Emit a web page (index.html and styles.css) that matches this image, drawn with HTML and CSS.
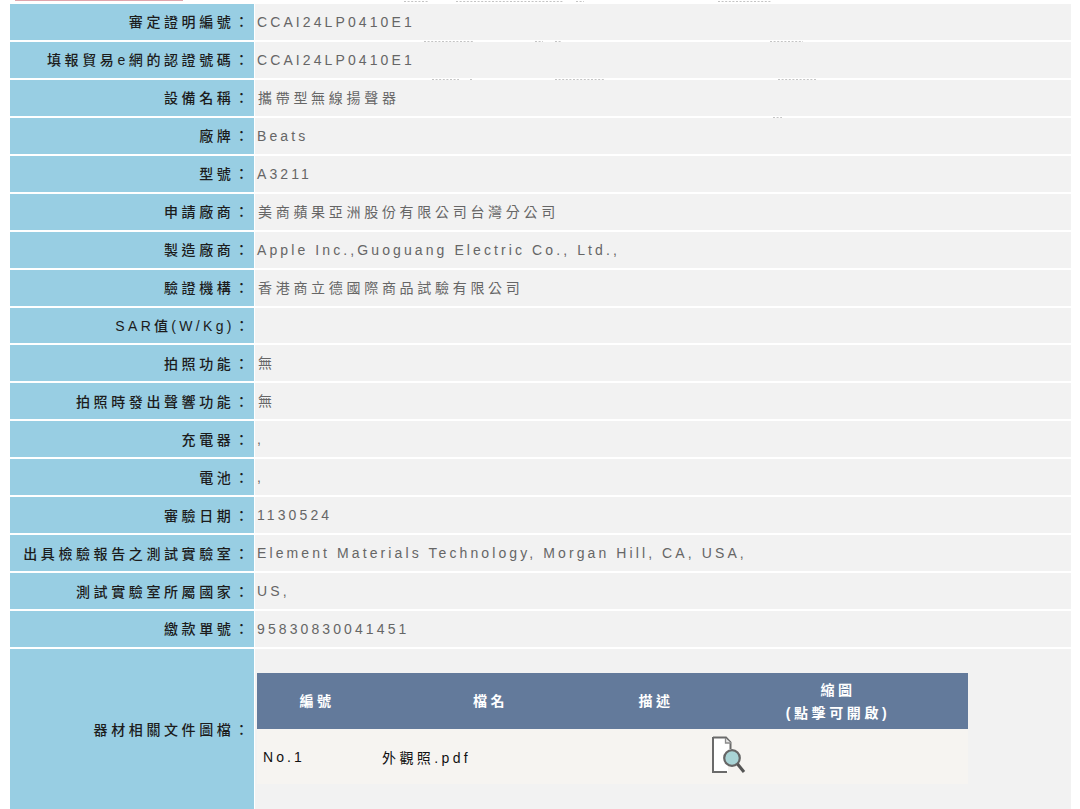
FILE: index.html
```html
<!DOCTYPE html>
<html lang="zh-Hant">
<head>
<meta charset="utf-8">
<title>審定證明</title>
<link rel="stylesheet" href="styles.css">
</head>
<body>
<div class="top-bar"></div>
<svg class="specks" width="1080" height="120" viewBox="0 0 1080 120" aria-hidden="true">
  <path d="M404 1.5H428M456 1.5H564M576 1.5H584M718 1.5H771M424 41.5H473M535 41.5H543M555 41.5H562M770 41.5H803M432 79.5H459M470 79.5H473M555 79.5H605M778 79.5H817M773 117.5H782" fill="none" stroke="#c4c4c4" stroke-width="1" stroke-dasharray="2 1.6"/>
</svg>
<main class="sheet">
  <div class="row"><div class="label">審定證明編號：</div><div class="value">CCAI24LP0410E1</div></div>
  <div class="row"><div class="label">填報貿易e網的認證號碼：</div><div class="value">CCAI24LP0410E1</div></div>
  <div class="row"><div class="label">設備名稱：</div><div class="value value-cjk">攜帶型無線揚聲器</div></div>
  <div class="row"><div class="label">廠牌：</div><div class="value">Beats</div></div>
  <div class="row"><div class="label">型號：</div><div class="value">A3211</div></div>
  <div class="row"><div class="label">申請廠商：</div><div class="value value-cjk">美商蘋果亞洲股份有限公司台灣分公司</div></div>
  <div class="row"><div class="label">製造廠商：</div><div class="value">Apple Inc.,Guoguang Electric Co., Ltd.,</div></div>
  <div class="row"><div class="label">驗證機構：</div><div class="value value-cjk">香港商立德國際商品試驗有限公司</div></div>
  <div class="row"><div class="label label-latin">SAR值(W/Kg)：</div><div class="value"></div></div>
  <div class="row"><div class="label">拍照功能：</div><div class="value value-cjk">無</div></div>
  <div class="row"><div class="label">拍照時發出聲響功能：</div><div class="value value-cjk">無</div></div>
  <div class="row"><div class="label">充電器：</div><div class="value">,</div></div>
  <div class="row"><div class="label">電池：</div><div class="value">,</div></div>
  <div class="row"><div class="label">審驗日期：</div><div class="value">1130524</div></div>
  <div class="row"><div class="label">出具檢驗報告之測試實驗室：</div><div class="value">Element Materials Technology, Morgan Hill, CA, USA,</div></div>
  <div class="row"><div class="label">測試實驗室所屬國家：</div><div class="value">US,</div></div>
  <div class="row"><div class="label">繳款單號：</div><div class="value">95830830041451</div></div>
  <div class="row row-files">
    <div class="label">器材相關文件圖檔：</div>
    <div class="value value-files">
      <div class="files">
        <div class="files-head">
          <div class="col-no">編號</div>
          <div class="col-name">檔名</div>
          <div class="col-desc">描述</div>
          <div class="col-thumb">縮圖<br>(點擊可開啟)</div>
        </div>
        <div class="files-row">
          <div class="col-no">No.1</div>
          <div class="col-name">外觀照.pdf</div>
          <div class="col-desc"></div>
          <div class="col-thumb">
            <svg class="doc-icon" width="36" height="40" viewBox="0 0 36 40" aria-hidden="true">
              <path d="M3 3.5H16L21 9V30H18V38H3Z" fill="#fff"/>
              <path d="M3 3.5H16L20.5 8.5V15M3 3V38H17" fill="none" stroke="#6a6a6a" stroke-width="2"/>
              <path d="M15.5 4V9H21" fill="#e6e6e6" stroke="#8a8a8a" stroke-width="1.3"/>
              <circle cx="22" cy="24" r="7.8" fill="#a9d4d6" stroke="#666" stroke-width="2.2"/>
              <path d="M27.5 30L34 38" stroke="#555" stroke-width="3"/>
            </svg>
          </div>
        </div>
      </div>
    </div>
  </div>
</main>
</body>
</html>
```
FILE: styles.css
```css
* { box-sizing: border-box; }
html, body { margin: 0; padding: 0; background: #fff; }
body {
  position: relative;
  height: 809px;
  overflow: hidden;
  font-family: "Liberation Sans", "Noto Sans CJK TC", sans-serif;
  font-size: 14px;
  letter-spacing: 3.1px;
}
.top-bar {
  width: 168px;
  height: 1px;
  margin-left: 15px;
  background: #e0a5ac;
}
.specks {
  position: absolute;
  top: 0;
  left: 0;
  pointer-events: none;
  z-index: 1;
}
.sheet {
  display: flex;
  flex-direction: column;
  gap: 2px;
  width: 1061px;
  margin: 3px 0 0 10px;
}
.row {
  display: flex;
  gap: 1px;
  height: 35.95px;
}
.label {
  flex: 0 0 244px;
  display: flex;
  align-items: center;
  justify-content: flex-end;
  padding: 0 2px 1px 0;
  background: #98cee3;
  color: #1c1c1c;
  font-weight: 500;
  letter-spacing: 3.6px;
  white-space: nowrap;
}
.label-latin { letter-spacing: 3.3px; }
.value {
  flex: 1;
  display: flex;
  align-items: center;
  padding-left: 2px;
  background: #f2f2f2;
  color: #666;
  white-space: nowrap;
}
.value-cjk {
  padding: 0 0 2px 3px;
  letter-spacing: 3.7px;
}
.row-files { height: 160px; }
.row-files .label { padding-bottom: 0; }
.value-files { padding: 24px 0 0 2px; align-items: flex-start; }
.files { width: 711px; }
.files-head, .files-row { display: flex; align-items: center; text-align: center; }
.files-head {
  height: 56px;
  padding-top: 2px;
  background: #637a9b;
  color: #fff;
  font-weight: bold;
  letter-spacing: 3.6px;
  line-height: 23px;
}
.files-row {
  height: 55px;
  background: #f6f4f1;
  color: #111;
}
.col-no { flex: 0 0 120px; }
.col-name { flex: 0 0 227px; }
.col-desc { flex: 0 0 104px; }
.col-thumb { flex: 0 0 260px; }
.files-row .col-no { text-align: left; padding: 2px 0 0 6px; }
.files-row .col-name { text-align: left; padding: 2px 0 0 5px; letter-spacing: 3.4px; }
.files-row .col-thumb { text-align: left; padding: 0 0 5px 2px; }
.doc-icon { display: block; }
```
